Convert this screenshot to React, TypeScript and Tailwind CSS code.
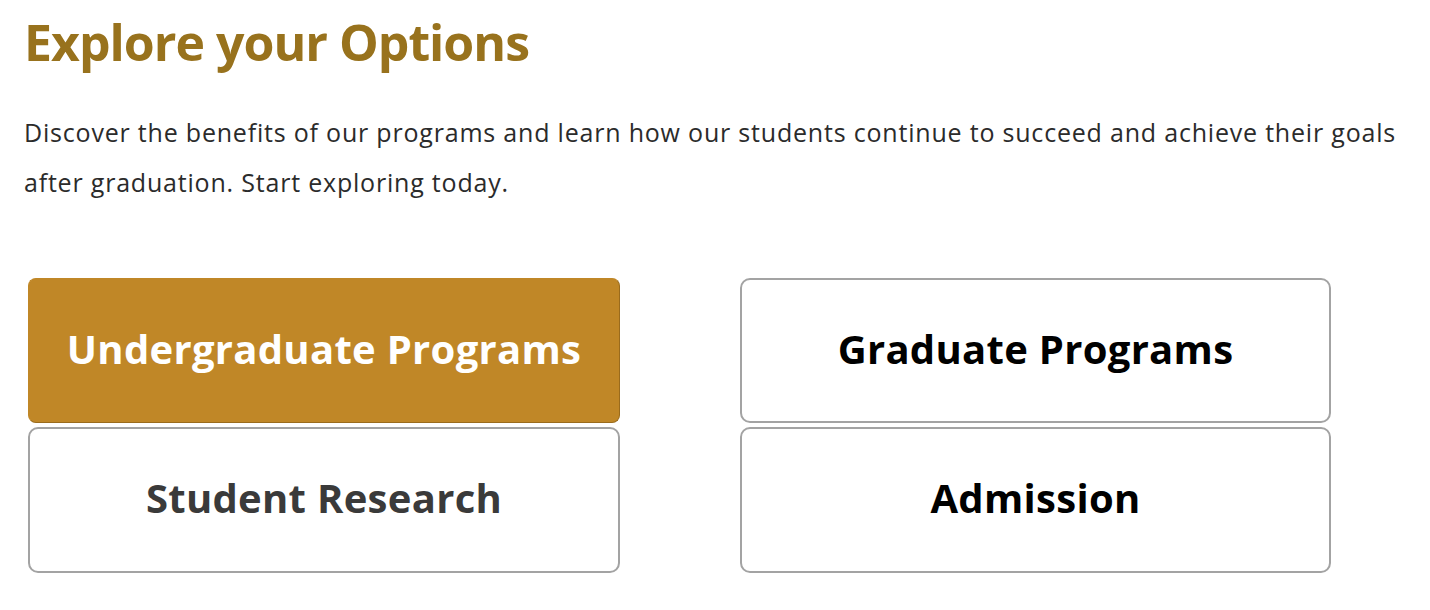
export default function App() {
  const font = { fontFamily: '"Open Sans", "Noto Sans", sans-serif' };
  return (
    <div className="min-h-screen bg-white" style={font}>
      <main className="px-6 pt-[11px]">
        <h1 className="text-[50px] leading-[62px] font-bold tracking-[-1px] text-[#98721d]">
          Explore your Options
        </h1>

        <p className="mt-[34px] max-w-[1400px] text-[25px] leading-[50px] text-[#2b2b2b] tracking-[0.8px]">
          Discover the benefits of our programs and learn how our students continue to succeed and achieve their goals
          after graduation. Start exploring today.
        </p>

        <div className="mt-[71px] ml-1 grid grid-cols-[592px_591px] grid-rows-[145px_146px] gap-x-[120px] gap-y-[4px]">
          <a
            href="#"
            className="flex items-center justify-center rounded-lg border border-[#c08727] border-r-[#9a6b1c] border-b-[#9a6b1c] bg-[#c08727] pb-1 text-[40px] font-bold tracking-[0.3px] text-white"
          >
            Undergraduate Programs
          </a>
          <a
            href="#"
            className="flex items-center justify-center rounded-[10px] border-2 border-[#a3a3a3] bg-white pb-1 text-[40px] font-bold tracking-[0.3px] text-black"
          >
            Graduate Programs
          </a>
          <a
            href="#"
            className="flex items-center justify-center rounded-[10px] border-2 border-[#a3a3a3] bg-white pb-1 text-[40px] font-bold tracking-[0.3px] text-[#3a3a3a]"
          >
            Student Research
          </a>
          <a
            href="#"
            className="flex items-center justify-center rounded-[10px] border-2 border-[#a3a3a3] bg-white pb-1 text-[40px] font-bold tracking-[0.3px] text-black"
          >
            Admission
          </a>
        </div>
      </main>
    </div>
  );
}
